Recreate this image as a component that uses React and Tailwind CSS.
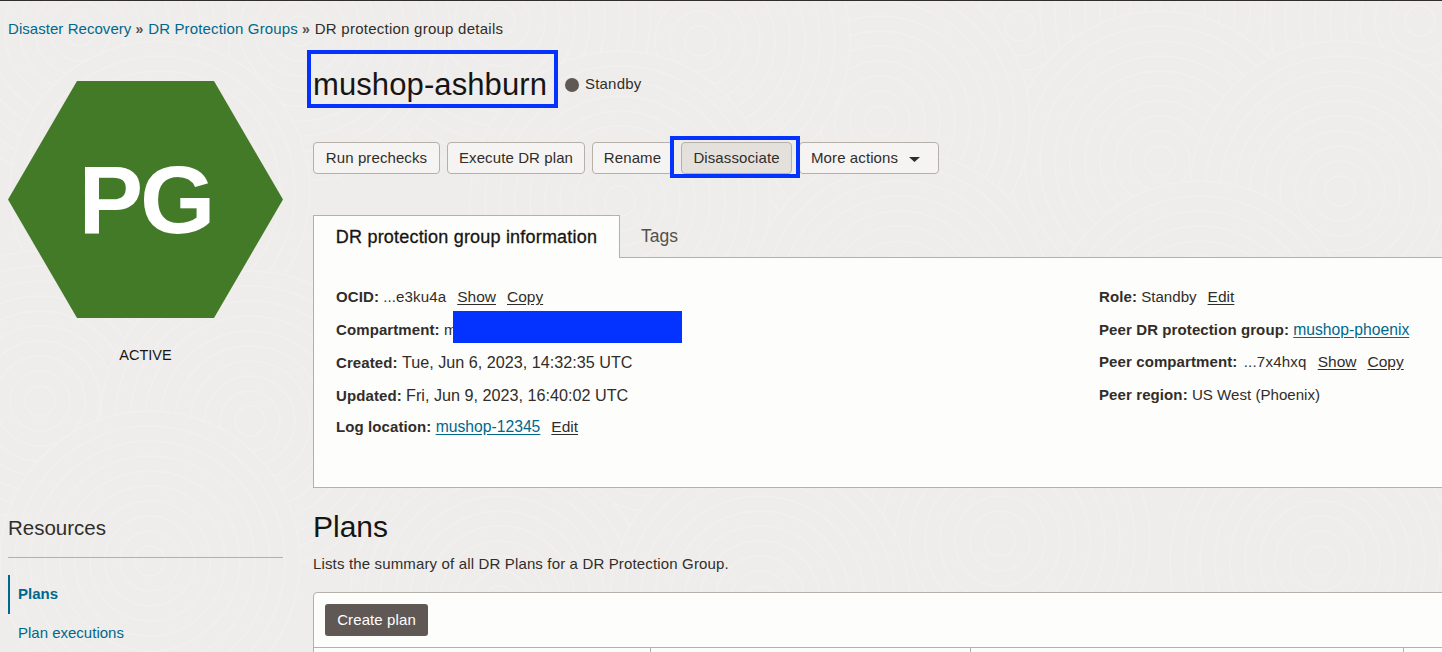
const font = { fontFamily: '"Liberation Sans", Arial, sans-serif' };

function TextLink({ children }) {
  return <a className="underline underline-offset-2 text-[15.5px] text-[#312d2a]">{children}</a>;
}

function BlueLink({ children }) {
  return <a className="underline underline-offset-2 text-[15.7px] text-[#00688c]">{children}</a>;
}

function Crumb() {
  return <span className="text-[#55504c] text-[14px] font-bold ml-[4px] mr-[5px] leading-none">»</span>;
}

function Button({ children, className = '' }) {
  return (
    <button className={`h-[32px] rounded-[4px] border border-[#b5b0a9] text-[15px] tracking-[0.1px] text-[#312d2a] flex items-center shrink-0 ${className}`}>
      {children}
    </button>
  );
}

function Row({ children }) {
  return <div className="h-[32.5px] pt-[6px] leading-[20px] flex items-baseline gap-[11px] whitespace-nowrap">{children}</div>;
}

function Label({ children, value, wide }) {
  return (
    <span>
      <b className="font-bold text-[15px] tracking-[0.1px]">{children}:</b>{' '}
      <span className={wide ? 'text-[16.2px]' : ''}>{value}</span>
    </span>
  );
}

// faint swirl pattern behind the page, later clusters cover earlier ones
function Swirls() {
  const centers = [
    [1020, 25], [1190, 10], [1420, 20], [1160, 160], [1340, 190], [880, 120], [700, 40], [500, 20], [300, 30], [80, 30],
    [160, 190], [620, 200], [900, 300], [1200, 330], [40, 400], [250, 420], [650, 420], [1000, 540], [1320, 560], [150, 560], [500, 600], [760, 600],
  ];
  return (
    <svg className="absolute inset-0 w-full h-full" fill="#eeedeb" stroke="#f1f0ee" strokeWidth="1.5">
      {centers.map(([cx, cy]) =>
        [150, 135, 120, 105, 90, 75, 60, 45, 30, 15].map((r) => <circle key={`${cx}-${r}`} cx={cx} cy={cy} r={r} />)
      )}
    </svg>
  );
}

export default function App() {
  return (
    <div style={font} className="relative w-[1442px] h-[652px] overflow-hidden bg-[#eeedeb] border-t border-[#312d2a] text-[#161513]">
      <Swirls />
      <div className="relative">
        <nav className="h-[20px] mt-[18px] pl-[8px] text-[15px] leading-[20px] flex items-center text-[#312d2a]">
          <a className="text-[#00688c] tracking-[0.05px]">Disaster Recovery</a>
          <Crumb />
          <a className="text-[#00688c] tracking-[0.15px]">DR Protection Groups</a>
          <Crumb />
          <span className="tracking-[0.25px]">DR protection group details</span>
        </nav>

        <div className="flex pl-[8px] mt-[11px]">
          <aside className="w-[275px] shrink-0">
            <div className="mt-[31px] relative">
              <svg width="275" height="237" viewBox="0 0 275 237" className="block">
                <polygon points="0,118.5 69,0 206,0 275,118.5 206,237 69,237" fill="#437a28" />
              </svg>
              <div className="absolute inset-0 flex items-center justify-center text-white font-bold text-[97px] leading-none tracking-[-3px]">PG</div>
            </div>
            <div className="text-center text-[14.5px] mt-[27px] leading-[20px]">ACTIVE</div>

            <h2 className="mt-[149px] text-[20.5px] leading-[28px] text-[#312d2a] pb-[15px] border-b border-[#b5b0a9]">Resources</h2>
            <div className="mt-[17px] text-[15px]">
              <div className="h-[39px] flex items-center pl-[8px] border-l-2 border-[#00688c] font-bold text-[#00688c]">Plans</div>
              <div className="h-[39px] flex items-center pl-[10px] text-[#00688c]">Plan executions</div>
            </div>
          </aside>

          <main className="ml-[30px] w-[1200px] shrink-0">
            <div className="flex items-center ml-[-6px]">
              <h1 className="h-[58px] w-[251px] border-[4px] border-[#0433ff] flex items-center pl-[2px] pt-[10px] text-[31px] tracking-[0.1px] leading-none text-[#161513] whitespace-nowrap">mushop-ashburn</h1>
              <span className="ml-[7px] mt-[12px] w-[14px] h-[14px] rounded-full bg-[#5f5855]" />
              <span className="ml-[6px] mt-[10px] text-[15px] tracking-[0.2px] text-[#312d2a]">Standby</span>
            </div>

            <div className="relative flex gap-[7px] mt-[34px]">
              <Button className="w-[127px] justify-center bg-[#f5f4f2]">Run prechecks</Button>
              <Button className="w-[138px] justify-center bg-[#f5f4f2]">Execute DR plan</Button>
              <Button className="w-[81px] justify-center bg-[#f5f4f2]">Rename</Button>
              <Button className="w-[111px] justify-center bg-[#e4e1dd] ml-[1px]">Disassociate</Button>
              <Button className="w-[140px] pl-[11px] bg-[#f5f4f2]">
                More actions
                <svg width="11" height="5" viewBox="0 0 11 5" className="ml-[11px] mt-[2px]"><polygon points="0,0 11,0 5.5,5" fill="#312d2a" /></svg>
              </Button>
              <div className="absolute left-[357px] top-[-6px] w-[130px] h-[42px] border-[4px] border-[#0433ff]" />
            </div>

            <div className="mt-[40px] flex items-end">
              <div className="h-[43px] w-[307px] bg-[#fdfdfb] border border-b-0 border-[#b5b0a9] flex items-center justify-center text-[18px] tracking-[0.2px] text-[#161513] relative z-10 translate-y-px">
                <span className="[-webkit-text-stroke:0.3px_#161513]">DR protection group information</span>
              </div>
              <div className="h-[42px] flex items-center pl-[21px] text-[17.5px] text-[#55504c]">Tags</div>
            </div>

            <div className="h-[231px] bg-[#fdfdfb] border border-[#b5b0a9] pt-[23px] pl-[22px] flex text-[15.1px] text-[#312d2a]">
              <div className="w-[763px]">
                <Row><Label value={<span className="tracking-[0.1px]">...e3ku4a</span>}>OCID</Label><TextLink>Show</TextLink><TextLink>Copy</TextLink></Row>
                <div className="h-[32.5px] pt-[6px] leading-[20px] flex items-baseline whitespace-nowrap relative">
                  <Label value="m">Compartment</Label>
                  <div className="absolute left-[117px] top-[-3px] w-[229px] h-[32px] bg-[#0433ff]" />
                </div>
                <Row><Label wide value="Tue, Jun 6, 2023, 14:32:35 UTC">Created</Label></Row>
                <Row><Label wide value="Fri, Jun 9, 2023, 16:40:02 UTC">Updated</Label></Row>
                <Row><Label value={<BlueLink>mushop-12345</BlueLink>}>Log location</Label><TextLink>Edit</TextLink></Row>
              </div>
              <div>
                <Row><Label value="Standby">Role</Label><TextLink>Edit</TextLink></Row>
                <Row><Label value={<BlueLink>mushop-phoenix</BlueLink>}>Peer DR protection group</Label></Row>
                <Row><Label value={<span className="ml-[2px] tracking-[0.2px]">...7x4hxq</span>}>Peer compartment</Label><TextLink>Show</TextLink><TextLink>Copy</TextLink></Row>
                <Row><Label value="US West (Phoenix)">Peer region</Label></Row>
              </div>
            </div>

            <h2 className="mt-[21px] text-[30px] leading-[36px] text-[#161513]">Plans</h2>
            <p className="mt-[9px] text-[15px] tracking-[0.15px] leading-[20px] text-[#312d2a]">Lists the summary of all DR Plans for a DR Protection Group.</p>

            <div className="mt-[18px] bg-[#fdfdfb] border border-[#b5b0a9] rounded-tl-[4px]">
              <div className="h-[54px] pl-[11px] flex items-center">
                <button className="h-[32px] w-[103px] rounded-[3px] bg-[#5f5855] text-[15px] tracking-[0.1px] text-white">Create plan</button>
              </div>
              <div className="h-[20px] border-t border-[#b5b0a9] flex">
                <div className="w-[337px] border-r border-[#b5b0a9]" />
                <div className="w-[320px] border-r border-[#b5b0a9]" />
                <div className="w-[433px] border-r border-[#b5b0a9]" />
              </div>
            </div>
          </main>
        </div>
      </div>
    </div>
  );
}
